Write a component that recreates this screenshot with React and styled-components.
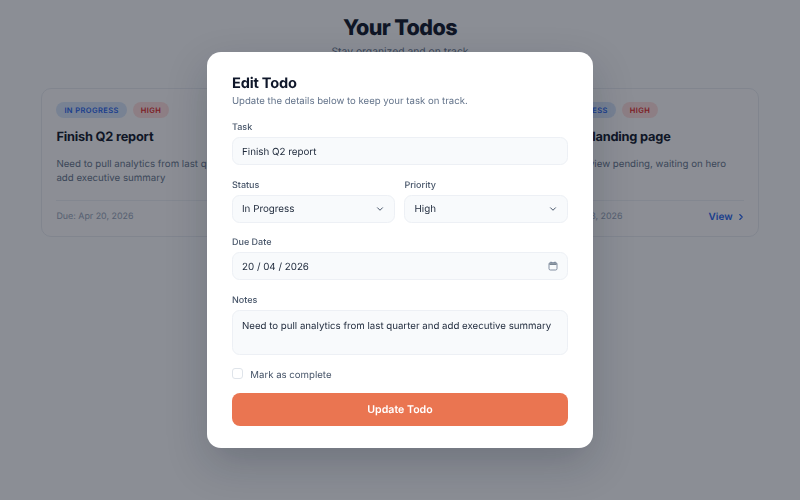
import React from 'react';
import styled, { createGlobalStyle } from 'styled-components';
import { ChevronDown, ChevronRight } from 'lucide-react';

const GlobalStyle = createGlobalStyle`
    * {
        box-sizing: border-box;
    }
    html, body {
        margin: 0;
        height: 100%;
    }
    body {
        background: #f8fafc;
        font-family: Inter, "Liberation Sans", sans-serif;
        color: #0f172a;
        overflow: hidden;
        text-rendering: geometricPrecision;
    }
    input, textarea, button {
        text-rendering: geometricPrecision;
    }
`;

const Page = styled.div`
    width: 800px;
    height: 500px;
    padding: 14.5px 40.7px 0;
    background: #f8fafc;
`;

const Header = styled.header`
    text-align: center;
    margin-bottom: 28.7px;
`;

const PageTitle = styled.h1`
    margin: 0 0 3.5px;
    font-size: 21.5px;
    line-height: 27px;
    font-weight: 800;
    letter-spacing: -0.6px;
    color: #0f172a;
`;

const PageSubtitle = styled.p`
    margin: 0;
    font-size: 10.35px;
    line-height: 14px;
    color: #64748b;
`;

const CardGrid = styled.div`
    display: grid;
    grid-template-columns: repeat(3, 1fr);
    gap: 15px;
`;

const Card = styled.article`
    height: 149px;
    padding: 13.7px 14.7px 0;
    background: #f9fafb;
    border: 1px solid #e5e9ef;
    border-radius: 10px;
    display: flex;
    flex-direction: column;
`;

const TagRow = styled.div`
    display: flex;
    gap: 6px;
    margin-bottom: 9.3px;
`;

const Tag = styled.span`
    height: 16px;
    padding: 0 8px;
    border-radius: 8px;
    font-size: 7.5px;
    line-height: 17px;
    font-weight: 600;
    letter-spacing: 0.4px;
    white-space: nowrap;
    color: ${p => (p.$tone === 'red' ? '#dc2626' : '#2563eb')};
    background: ${p => (p.$tone === 'red' ? '#fbdcdc' : '#d3e2f8')};
`;

const CardTitle = styled.h3`
    margin: 0 0 9px;
    font-size: 12.8px;
    line-height: 20px;
    font-weight: 700;
    letter-spacing: -0.2px;
    white-space: nowrap;
`;

const CardText = styled.p`
    margin: 0 0 14.6px;
    padding-top: 1px;
    height: 29px;
    font-size: 9.7px;
    line-height: 14px;
    color: #64748b;
`;

const CardFooter = styled.div`
    display: flex;
    justify-content: space-between;
    align-items: center;
    padding-top: 10px;
    border-top: 1px solid #e9edf2;
    font-size: 8.9px;
    line-height: 12px;
    color: #94a3b8;
`;

const ViewLink = styled.a`
    display: flex;
    align-items: center;
    gap: 3px;
    margin-right: -2px;
    font-size: 10px;
    font-weight: 600;
    color: #2563eb;
`;

const Overlay = styled.div`
    position: fixed;
    inset: 0;
    display: flex;
    align-items: center;
    justify-content: center;
    background: rgba(18, 22, 34, 0.47);
    backdrop-filter: blur(0.6px);
`;

const Modal = styled.form`
    width: 385.4px;
    padding: 21.7px 24.7px 21.4px;
    background: #fff;
    border-radius: 14px;
    box-shadow: 0 16px 40px rgba(15, 23, 42, 0.22);
`;

const ModalTitle = styled.h2`
    margin: 0 0 2px;
    font-size: 14.6px;
    line-height: 18px;
    font-weight: 700;
    letter-spacing: -0.2px;
    color: #0f172a;
`;

const ModalSubtitle = styled.p`
    margin: 0 0 12px;
    font-size: 9.6px;
    line-height: 15px;
    color: #64748b;
`;

const Field = styled.div`
    margin-bottom: ${p => (p.$tight ? '12px' : '13.7px')};
    min-width: 0;
`;

const Label = styled.label`
    display: block;
    margin-bottom: 3px;
    font-size: 9px;
    line-height: 13px;
    font-weight: 500;
    color: #475569;
`;

const FieldRow = styled.div`
    display: grid;
    grid-template-columns: 1fr 1fr;
    gap: 9px;
`;

const Control = styled.div`
    display: flex;
    align-items: center;
    justify-content: space-between;
    height: 28px;
    padding: 0 9px;
    background: #f8fafc;
    border: 1px solid #edf0f5;
    border-radius: 7.5px;
    font-size: 9.8px;
    color: #1e293b;
`;

const ControlText = styled.span`
    padding-top: 2px;
`;

const TextInput = styled.input`
    width: 100%;
    border: 0;
    padding: 2px 0 0;
    outline: 0;
    background: transparent;
    font: inherit;
    color: inherit;
`;

const NotesBox = styled.textarea`
    display: block;
    width: 100%;
    height: 45px;
    padding: 9px 9px 7px;
    resize: none;
    outline: 0;
    background: #f8fafc;
    border: 1px solid #edf0f5;
    border-radius: 7.5px;
    font-family: inherit;
    font-size: 9.7px;
    line-height: 14px;
    color: #1e293b;
`;

const CheckRow = styled.label`
    display: flex;
    align-items: center;
    gap: 7px;
    height: 14px;
    margin-bottom: 12px;
    font-size: 9.65px;
    line-height: 14px;
    color: #475569;
`;

const CheckText = styled.span`
    padding-top: 3px;
`;

const CheckBox = styled.span`
    width: 11.3px;
    height: 11.3px;
    margin-top: -1px;
    border: 1px solid #dfe4ea;
    border-radius: 3px;
    background: #fff;
`;

const SubmitButton = styled.button`
    display: block;
    width: 100%;
    height: 33px;
    border: 0;
    border-radius: 8px;
    background: #ea7551;
    color: #fff;
    font-family: inherit;
    font-size: 10.6px;
    font-weight: 600;
`;

function CalendarGlyph() {
    return (
        <svg width="10" height="10" viewBox="0 0 10 10" fill="none" stroke="#64748b" strokeWidth="0.8">
            <rect x="1" y="1.6" width="8" height="7.4" rx="1.4" />
            <path d="M3 .6v1.6M7 .6v1.6" />
            <path d="M1.4 2.2h7.2v1.8H1.4z" fill="#7b8794" stroke="none" />
        </svg>
    );
}

const cards = [
    { title: 'Finish Q2 report', text: 'Need to pull analytics from last quarter and add executive summary', due: 'Apr 20, 2026' },
    { title: 'Book dentist visit', text: 'Call the clinic and confirm the time', due: 'Apr 21, 2026' },
    { title: 'Update landing page', text: 'Design review pending, waiting on hero images', due: 'Apr 23, 2026' },
];

export default function App() {
    return (
        <>
            <GlobalStyle />
            <Page>
                <Header>
                    <PageTitle>Your Todos</PageTitle>
                    <PageSubtitle>Stay organized and on track</PageSubtitle>
                </Header>
                <CardGrid>
                    {cards.map((card) => (
                        <Card key={card.title}>
                            <TagRow>
                                <Tag>IN PROGRESS</Tag>
                                <Tag $tone="red">HIGH</Tag>
                            </TagRow>
                            <CardTitle>{card.title}</CardTitle>
                            <CardText>{card.text}</CardText>
                            <CardFooter>
                                <span>Due: {card.due}</span>
                                <ViewLink>View <ChevronRight size={10} strokeWidth={2.6} /></ViewLink>
                            </CardFooter>
                        </Card>
                    ))}
                </CardGrid>
            </Page>
            <Overlay>
                <Modal>
                    <ModalTitle>Edit Todo</ModalTitle>
                    <ModalSubtitle>Update the details below to keep your task on track.</ModalSubtitle>
                    <Field>
                        <Label>Task</Label>
                        <Control><TextInput defaultValue="Finish Q2 report" /></Control>
                    </Field>
                    <FieldRow>
                        <Field>
                            <Label>Status</Label>
                            <Control><ControlText>In Progress</ControlText><ChevronDown size={10} strokeWidth={2.4} color="#475569" /></Control>
                        </Field>
                        <Field>
                            <Label>Priority</Label>
                            <Control><ControlText>High</ControlText><ChevronDown size={10} strokeWidth={2.4} color="#475569" /></Control>
                        </Field>
                    </FieldRow>
                    <Field>
                        <Label>Due Date</Label>
                        <Control><ControlText>20 / 04 / 2026</ControlText><CalendarGlyph /></Control>
                    </Field>
                    <Field $tight>
                        <Label>Notes</Label>
                        <NotesBox defaultValue="Need to pull analytics from last quarter and add executive summary" />
                    </Field>
                    <CheckRow><CheckBox /><CheckText>Mark as complete</CheckText></CheckRow>
                    <SubmitButton type="button">Update Todo</SubmitButton>
                </Modal>
            </Overlay>
        </>
    );
}
